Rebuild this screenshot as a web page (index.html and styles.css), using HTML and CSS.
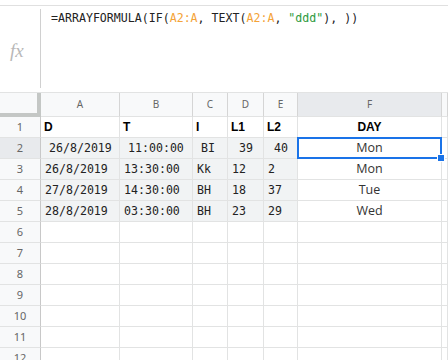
FILE: index.html
```html
<!DOCTYPE html>
<html lang="en">
<head>
    <meta charset="UTF-8">
    <title>Sheet</title>
    <link rel="stylesheet" href="styles.css">
</head>
<body>
    <div class="formula-bar">
        <div class="fx">fx</div>
        <div class="formula">=ARRAYFORMULA(IF(<span class="ref">A2:A</span>, TEXT(<span class="ref">A2:A</span>, <span class="str">"ddd"</span>), ))</div>
    </div>

    <div class="sheet">
        <div class="cell corner"></div>
        <div class="cell col-head">A</div>
        <div class="cell col-head">B</div>
        <div class="cell col-head">C</div>
        <div class="cell col-head">D</div>
        <div class="cell col-head">E</div>
        <div class="cell col-head active">F</div>
        <div class="cell col-head"></div>

        <div class="cell row-head">1</div>
        <div class="cell bold">D</div>
        <div class="cell bold">T</div>
        <div class="cell bold">I</div>
        <div class="cell bold">L1</div>
        <div class="cell bold">L2</div>
        <div class="cell bold center">DAY</div>
        <div class="cell"></div>

        <div class="cell row-head active">2</div>
        <div class="cell data mono shift">26/8/2019</div>
        <div class="cell data mono shift">11:00:00</div>
        <div class="cell data mono shift">BI</div>
        <div class="cell data mono shift-lg">39</div>
        <div class="cell data mono shift-md">40</div>
        <div class="cell center day selected">Mon<span class="handle"></span></div>
        <div class="cell"></div>

        <div class="cell row-head">3</div>
        <div class="cell data mono">26/8/2019</div>
        <div class="cell data mono">13:30:00</div>
        <div class="cell data mono">Kk</div>
        <div class="cell data mono">12</div>
        <div class="cell data mono">2</div>
        <div class="cell center day">Mon</div>
        <div class="cell"></div>

        <div class="cell row-head">4</div>
        <div class="cell data mono">27/8/2019</div>
        <div class="cell data mono">14:30:00</div>
        <div class="cell data mono">BH</div>
        <div class="cell data mono">18</div>
        <div class="cell data mono">37</div>
        <div class="cell center day">Tue</div>
        <div class="cell"></div>

        <div class="cell row-head">5</div>
        <div class="cell data mono">28/8/2019</div>
        <div class="cell data mono">03:30:00</div>
        <div class="cell data mono">BH</div>
        <div class="cell data mono">23</div>
        <div class="cell data mono">29</div>
        <div class="cell center day">Wed</div>
        <div class="cell"></div>

        <div class="cell row-head">6</div><div class="cell"></div><div class="cell"></div><div class="cell"></div><div class="cell"></div><div class="cell"></div><div class="cell"></div><div class="cell"></div>
        <div class="cell row-head">7</div><div class="cell"></div><div class="cell"></div><div class="cell"></div><div class="cell"></div><div class="cell"></div><div class="cell"></div><div class="cell"></div>
        <div class="cell row-head">8</div><div class="cell"></div><div class="cell"></div><div class="cell"></div><div class="cell"></div><div class="cell"></div><div class="cell"></div><div class="cell"></div>
        <div class="cell row-head">9</div><div class="cell"></div><div class="cell"></div><div class="cell"></div><div class="cell"></div><div class="cell"></div><div class="cell"></div><div class="cell"></div>
        <div class="cell row-head">10</div><div class="cell"></div><div class="cell"></div><div class="cell"></div><div class="cell"></div><div class="cell"></div><div class="cell"></div><div class="cell"></div>
        <div class="cell row-head">11</div><div class="cell"></div><div class="cell"></div><div class="cell"></div><div class="cell"></div><div class="cell"></div><div class="cell"></div><div class="cell"></div>
        <div class="cell row-head">12</div><div class="cell"></div><div class="cell"></div><div class="cell"></div><div class="cell"></div><div class="cell"></div><div class="cell"></div><div class="cell"></div>
    </div>
</body>
</html>
```

FILE: styles.css
```css
:root {
    --grid-color: #e2e3e3;
    --head-bg: #f8f9fa;
    --head-active: #e8eaed;
    --data-bg: #f1f3f4;
    --freeze-color: #c4c7c5;
    --text-color: #222222;
    --head-text: #666666;
    --blue: #1a73e8;
}

* {
    margin: 0;
    padding: 0;
    box-sizing: border-box;
}

body {
    width: 448px;
    height: 360px;
    overflow: hidden;
    background: #ffffff;
    color: var(--text-color);
    font-family: Roboto, "Liberation Sans", Arial, sans-serif;
    padding-top: 5px;
}

/* --- 公式栏 --- */
.formula-bar {
    display: flex;
    height: 87px;
    border-top: 1px solid #e0e0e0;
}

.fx {
    width: 41px;
    flex: none;
    margin: 3px 0 4px;
    border-right: 1px solid #d0d0d0;
    color: #b8b8b8;
    font-family: "Liberation Serif", "DejaVu Serif", serif;
    font-style: italic;
    font-size: 19px;
    padding: 31px 0 0 10px;
}

.formula {
    padding: 4px 0 0 10px;
    font-family: "DejaVu Sans Mono", "Liberation Mono", monospace;
    font-size: 11.6px;
    line-height: 16px;
    color: #222222;
}

.ref {
    color: #f4a338;
}

.str {
    color: #2e9a3e;
}

/* --- 表格 --- */
.sheet {
    display: grid;
    grid-template-columns: 41px 79px 73px 35px 36px 34px 144px 1fr;
    grid-template-rows: 24px;
    grid-auto-rows: 21px;
    border-top: 1px solid var(--grid-color);
}

.cell {
    position: relative;
    border-right: 1px solid var(--grid-color);
    border-bottom: 1px solid var(--grid-color);
    font-size: 12px;
    line-height: 20px;
    padding-left: 4px;
    white-space: nowrap;
}

.corner {
    background: var(--head-bg);
    border-right: 4px solid var(--freeze-color);
    border-bottom: 4px solid var(--freeze-color);
}

.col-head {
    background: var(--head-bg);
    color: var(--head-text);
    font-family: "Noto Sans", Roboto, sans-serif;
    font-size: 10px;
    line-height: 23px;
    text-align: center;
    padding: 0;
    border-right-color: #d5d5d5;
}

.col-head.active {
    background: var(--head-active);
}

.row-head {
    background: var(--head-bg);
    color: var(--head-text);
    font-family: "Noto Sans", Roboto, sans-serif;
    font-size: 11px;
    text-align: center;
    padding: 0;
    border-right-color: #c8c8c8;
}

.row-head.active {
    background: var(--head-active);
}

.bold {
    font-family: "Liberation Sans", Arial, sans-serif;
    font-weight: bold;
    font-size: 12px;
    color: #000000;
    padding-left: 3px;
}

.center {
    text-align: center;
    padding-left: 0;
}

.data {
    background: var(--data-bg);
}

.mono {
    font-family: "DejaVu Sans Mono", "Liberation Mono", monospace;
    font-size: 11.6px;
    color: #222222;
}

.shift {
    padding-left: 8px;
}

.shift-md {
    padding-left: 10px;
}

.shift-lg {
    padding-left: 11px;
}

.day {
    font-family: "Open Sans", "Noto Sans", sans-serif;
    font-size: 12.5px;
    color: #333333;
}

/* --- 选中单元格 --- */
.selected::after {
    content: "";
    position: absolute;
    left: -1px;
    top: -1px;
    right: -1px;
    bottom: -1px;
    border: 2px solid var(--blue);
}

.handle {
    position: absolute;
    right: -4px;
    bottom: -4px;
    width: 6px;
    height: 6px;
    background: var(--blue);
    border: 1px solid #ffffff;
    box-sizing: content-box;
    z-index: 2;
}
```
